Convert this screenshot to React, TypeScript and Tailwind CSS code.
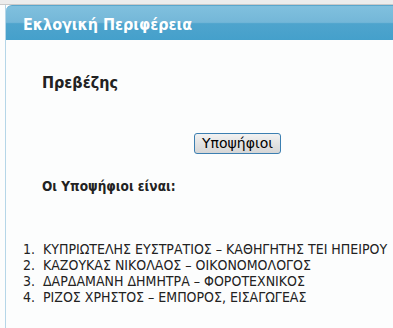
import React from 'react';

const candidates = [
  'ΚΥΠΡΙΩΤΕΛΗΣ ΕΥΣΤΡΑΤΙΟΣ – ΚΑΘΗΓΗΤΗΣ ΤΕΙ ΗΠΕΙΡΟΥ',
  'ΚΑΖΟΥΚΑΣ ΝΙΚΟΛΑΟΣ – ΟΙΚΟΝΟΜΟΛΟΓΟΣ',
  'ΔΑΡΔΑΜΑΝΗ ΔΗΜΗΤΡΑ – ΦΟΡΟΤΕΧΝΙΚΟΣ',
  'ΡΙΖΟΣ ΧΡΗΣΤΟΣ – ΕΜΠΟΡΟΣ, ΕΙΣΑΓΩΓΕΑΣ',
];

const App: React.FC = () => {
  return (
    <div className="h-[328px] w-[393px] overflow-hidden bg-[#fcfdfd] font-['DejaVu_Sans_Condensed','DejaVu_Sans',sans-serif] text-[#1a1a1a]">
      <div className="h-[5px] border-b border-[#c9c9c9] bg-[#ececec]" />
      <div className="ml-[5px] h-[323px] border-l border-[#b5d6e8]">
        <div className="flex h-[35px] items-center rounded-tl-[6px] border-t border-[#5aa6cc] bg-[linear-gradient(to_bottom,#80c0de_0%,#74b7d8_48%,#4ea4cd_52%,#45a0cb_100%)] pl-[17px] pt-[3px]">
          <span className="text-[16px] font-bold text-white">Εκλογική Περιφέρεια</span>
        </div>

        <div className="pl-[36px] pt-[34px]">
          <h2 className="text-[16px] leading-[18px] font-bold text-[#222]">Πρεβέζης</h2>
        </div>

        <div className="flex justify-center pl-[76px] pt-[41px]">
          <button className="h-[21px] rounded-[3px] border border-[#3c7fb1] bg-[linear-gradient(to_bottom,#f2f2f2,#e3e3e3_50%,#d6d6d6)] px-[7px] font-['DejaVu_Sans',sans-serif] text-[14px] leading-[17px] text-black">
            Υποψήφιοι
          </button>
        </div>

        <div className="pl-[36px] pt-[24px]">
          <p className="text-[13.5px] leading-[16px] font-bold text-[#222]">Οι Υποψήφιοι είναι:</p>
        </div>

        <ol className="pt-[47px] pl-[17px] text-[14px] leading-[16px] text-[#222] whitespace-nowrap">
          {candidates.map((c, i) => (
            <li key={i} className="flex">
              <span className="w-[20px]">{i + 1}.</span>
              <span>{c}</span>
            </li>
          ))}
        </ol>
      </div>
    </div>
  );
};

export default App;
